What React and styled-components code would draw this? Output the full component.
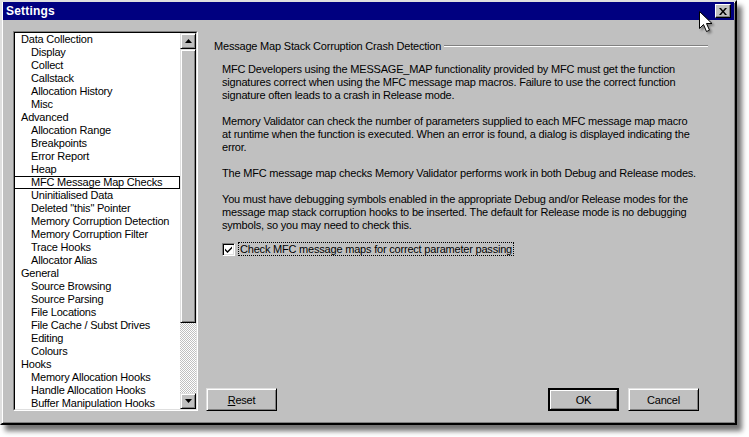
import React from "react";
import styled, { createGlobalStyle, css } from "styled-components";

const GlobalStyle = createGlobalStyle`
  html, body {
    margin: 0;
    padding: 0;
    background: #ffffff;
  }
  body {
    font-family: "Liberation Sans", Arial, sans-serif;
    font-size: 11px;
    letter-spacing: -0.2px;
    color: #000;
  }
`;

const Page = styled.div`
  position: relative;
  width: 749px;
  height: 437px;
  overflow: hidden;
`;

const Window = styled.div`
  width: 733px;
  height: 421px;
  background: #c0c0c0;
  border: 2px solid;
  border-color: #dfdfdf #000 #000 #dfdfdf;
  box-shadow: inset 1px 1px 0 #fff, inset -1px -1px 0 #808080,
    5px 6px 5px rgba(0, 0, 0, 0.55);
  display: flex;
  flex-direction: column;
`;

const TitleBar = styled.div`
  height: 18px;
  margin: 0 1px;
  background: #000080;
  display: flex;
  align-items: center;
  justify-content: space-between;
  padding: 0 3px 0 3px;
`;

const Title = styled.span`
  color: #fff;
  font-weight: bold;
  font-size: 12px;
  letter-spacing: 0.2px;
`;

const CloseButton = styled.div`
  width: 16px;
  height: 14px;
  box-sizing: border-box;
  background: #c0c0c0;
  border: 1px solid;
  border-color: #fff #000 #000 #fff;
  box-shadow: inset -1px -1px 0 #808080;
  display: flex;
  align-items: center;
  justify-content: center;
`;

const Body = styled.div`
  flex: 1;
  display: flex;
  padding: 11px 0 0 11px;
`;

const Tree = styled.div`
  width: 185px;
  height: 380px;
  box-sizing: border-box;
  border: 1px solid;
  border-color: #808080 #fff #fff #808080;
  display: flex;
`;

const TreeInner = styled.div`
  flex: 1;
  display: flex;
  border: 1px solid;
  border-color: #000 #dfdfdf #dfdfdf #000;
  background: #fff;
`;

const TreeList = styled.div`
  flex: 1;
  overflow: hidden;
`;

const Item = styled.div`
  height: 13px;
  line-height: 13px;
  white-space: nowrap;
  box-sizing: border-box;
  padding-left: ${({ $child }) => ($child ? 16 : 6)}px;
  border: 1px solid transparent;
  margin-left: -1px;
  display: flex;
  align-items: center;
  ${({ $focused }) =>
    $focused &&
    css`
      border-color: #000;
    `}
`;

const ScrollBar = styled.div`
  width: 16px;
  display: flex;
  flex-direction: column;
  background: repeating-conic-gradient(#c0c0c0 0% 25%, #fff 0% 50%) 0 0 /
    2px 2px;
`;

const raised = css`
  box-sizing: border-box;
  background: #c0c0c0;
  border: 1px solid;
  border-color: #dfdfdf #000 #000 #dfdfdf;
  box-shadow: inset 1px 1px 0 #fff, inset -1px -1px 0 #808080;
`;

const ScrollArrow = styled.div`
  ${raised};
  height: 16px;
  display: flex;
  align-items: center;
  justify-content: center;
`;

const Thumb = styled.div`
  ${raised};
  height: 274px;
`;

const Right = styled.div`
  width: 502px;
  margin-left: 8px;
  display: flex;
  flex-direction: column;
`;

const GroupHeader = styled.div`
  display: flex;
  align-items: center;
  margin-top: 8px;
  padding-left: 8px;
  height: 13px;
`;

const GroupLabel = styled.span`
  white-space: nowrap;
  padding-right: 3px;
`;

const GroupLine = styled.div`
  flex: 1;
  height: 0;
  border-top: 1px solid #808080;
  border-bottom: 1px solid #fff;
  margin-top: 1px;
`;

const Content = styled.div`
  padding: 11px 0 0 16px;
  display: flex;
  flex-direction: column;
  gap: 13px;
`;

const Para = styled.p`
  margin: 0;
  line-height: 13px;
  white-space: nowrap;
`;

const CheckRow = styled.label`
  display: flex;
  align-items: center;
  gap: 3px;
  margin-top: -3px;
`;

const CheckBox = styled.span`
  width: 13px;
  height: 13px;
  box-sizing: border-box;
  background: #fff;
  border: 1px solid;
  border-color: #808080 #fff #fff #808080;
  box-shadow: inset 1px 1px 0 #000, inset -1px -1px 0 #dfdfdf;
  display: flex;
  align-items: center;
  justify-content: center;
`;

const CheckLabel = styled.span`
  border: 1px dotted #000;
  padding: 0 1px;
  line-height: 12px;
  white-space: nowrap;
`;

const Spacer = styled.div`
  flex: 1;
`;

const ButtonRow = styled.div`
  display: flex;
  padding: 0 9px 12px 0;
`;

const Button = styled.div`
  ${raised};
  width: 71px;
  height: 23px;
  display: flex;
  align-items: center;
  justify-content: center;
  margin-left: ${({ $gap }) => $gap || 0}px;
  ${({ $default }) =>
    $default &&
    css`
      border: 2px solid #000;
      box-shadow: inset 1px 1px 0 #fff, inset -1px -1px 0 #808080;
    `}
`;

const Pointer = styled.svg`
  position: absolute;
  left: 699px;
  top: 11px;
  filter: drop-shadow(2px 2px 1px rgba(0, 0, 0, 0.35));
`;

const items = [
  ["Data Collection", false],
  ["Display", true],
  ["Collect", true],
  ["Callstack", true],
  ["Allocation History", true],
  ["Misc", true],
  ["Advanced", false],
  ["Allocation Range", true],
  ["Breakpoints", true],
  ["Error Report", true],
  ["Heap", true],
  ["MFC Message Map Checks", true, true],
  ["Uninitialised Data", true],
  ['Deleted "this" Pointer', true],
  ["Memory Corruption Detection", true],
  ["Memory Corruption Filter", true],
  ["Trace Hooks", true],
  ["Allocator Alias", true],
  ["General", false],
  ["Source Browsing", true],
  ["Source Parsing", true],
  ["File Locations", true],
  ["File Cache / Subst Drives", true],
  ["Editing", true],
  ["Colours", true],
  ["Hooks", false],
  ["Memory Allocation Hooks", true],
  ["Handle Allocation Hooks", true],
  ["Buffer Manipulation Hooks", true],
];

const paragraphs = [
  [
    "MFC Developers using the MESSAGE_MAP functionality provided by MFC must get the function",
    "signatures correct when using the MFC message map macros. Failure to use the correct function",
    "signature often leads to a crash in Release mode.",
  ],
  [
    "Memory Validator can check the number of parameters supplied to each MFC message map macro",
    "at runtime when the function is executed. When an error is found, a dialog is displayed indicating the",
    "error.",
  ],
  [
    "The MFC message map checks Memory Validator performs work in both Debug and Release modes.",
  ],
  [
    "You must have debugging symbols enabled in the appropriate Debug and/or Release modes for the",
    "message map stack corruption hooks to be inserted. The default for Release mode is no debugging",
    "symbols, so you may need to check this.",
  ],
];

export default function App() {
  return (
    <Page>
      <GlobalStyle />
      <Window>
        <TitleBar>
          <Title>Settings</Title>
          <CloseButton>
            <svg width="8" height="7" viewBox="0 0 8 7">
              <path d="M0 0h2l2 2.5L6 0h2L5 3.5 8 7H6L4 4.5 2 7H0l3-3.5z" fill="#000" />
            </svg>
          </CloseButton>
        </TitleBar>
        <Body>
          <Tree>
            <TreeInner>
              <TreeList>
                {items.map(([label, child, focused], i) => (
                  <Item key={i} $child={child} $focused={focused}>
                    {label}
                  </Item>
                ))}
              </TreeList>
              <ScrollBar>
                <ScrollArrow>
                  <svg width="7" height="4" viewBox="0 0 7 4">
                    <path d="M3.5 0L7 4H0z" fill="#000" />
                  </svg>
                </ScrollArrow>
                <Thumb />
                <Spacer />
                <ScrollArrow>
                  <svg width="7" height="4" viewBox="0 0 7 4">
                    <path d="M0 0h7L3.5 4z" fill="#000" />
                  </svg>
                </ScrollArrow>
              </ScrollBar>
            </TreeInner>
          </Tree>
          <Right>
            <GroupHeader>
              <GroupLabel>Message Map Stack Corruption Crash Detection</GroupLabel>
              <GroupLine />
            </GroupHeader>
            <Content>
              {paragraphs.map((lines, i) => (
                <Para key={i}>
                  {lines.map((l, j) => (
                    <React.Fragment key={j}>
                      {l}
                      {j < lines.length - 1 && <br />}
                    </React.Fragment>
                  ))}
                </Para>
              ))}
              <CheckRow>
                <CheckBox>
                  <svg width="7" height="7" viewBox="0 0 7 7">
                    <path d="M0 2.5l2.5 2.5L7 0.5v2L2.5 7 0 4.5z" fill="#000" />
                  </svg>
                </CheckBox>
                <CheckLabel>Check MFC message maps for correct parameter passing</CheckLabel>
              </CheckRow>
            </Content>
            <Spacer />
            <ButtonRow>
              <Button>
                <span>
                  <u>R</u>eset
                </span>
              </Button>
              <Spacer />
              <Button $default>OK</Button>
              <Button $gap={9}>Cancel</Button>
            </ButtonRow>
          </Right>
        </Body>
      </Window>
      <Pointer width="14" height="22" viewBox="0 0 14 22">
        <path
          d="M0.5 0.5v17l4-4 3 7 3-1.3-3-6.7h5.5z"
          fill="#fff"
          stroke="#000"
          strokeWidth="1"
        />
      </Pointer>
    </Page>
  );
}
